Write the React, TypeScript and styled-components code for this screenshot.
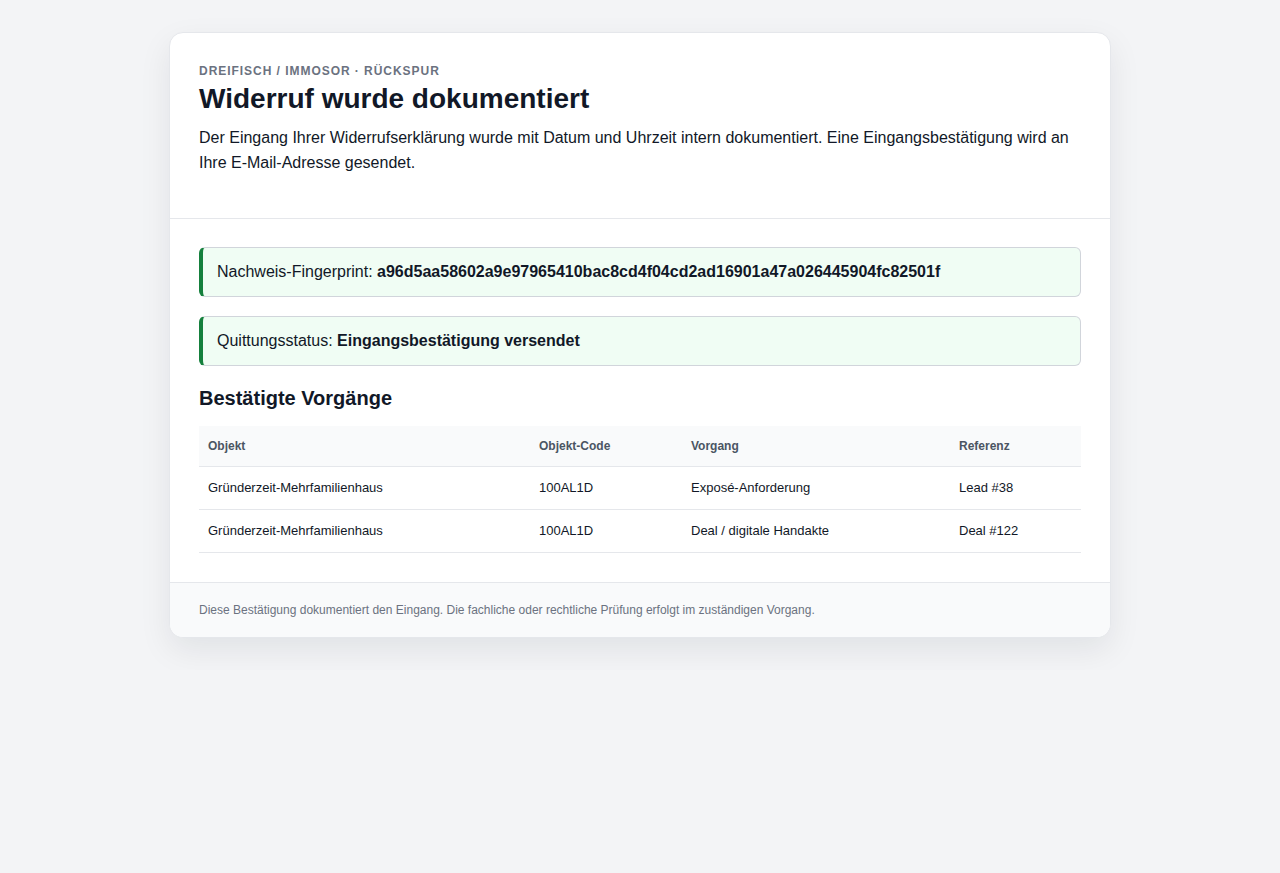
import React from 'react';
import styled, { createGlobalStyle } from 'styled-components';

const GlobalStyle = createGlobalStyle`
    html, body {
        margin: 0;
        padding: 0;
        background: #f3f4f6;
        font-family: "Liberation Sans", Arial, sans-serif;
        color: #111827;
    }
    * {
        box-sizing: border-box;
    }
`;

const Page = styled.div`
    padding: 32px 16px;
    display: flex;
    justify-content: center;
`;

const Card = styled.div`
    width: 942px;
    background: #ffffff;
    border: 1px solid #e5e7eb;
    border-radius: 14px;
    box-shadow: 0 12px 32px rgba(17, 24, 39, 0.08);
    overflow: hidden;
`;

const Header = styled.header`
    padding: 30px 29px 29px;
    border-bottom: 1px solid #e5e7eb;
`;

const Eyebrow = styled.div`
    font-size: 12px;
    line-height: 16px;
    font-weight: 700;
    letter-spacing: 0.08em;
    text-transform: uppercase;
    color: #6b7280;
`;

const Title = styled.h1`
    margin: 3px 0 9px;
    font-size: 28px;
    line-height: 34px;
    font-weight: 700;
    color: #111827;
`;

const Lead = styled.p`
    margin: 0 0 14px;
    font-size: 16px;
    line-height: 25px;
    color: #111827;
`;

const Body = styled.section`
    padding: 28px 29px 29px;
    display: flex;
    flex-direction: column;
`;

const Callout = styled.div`
    background: #f0fdf4;
    border: 1px solid #d1d5db;
    border-left: 4px solid #15803d;
    border-radius: 6px;
    padding: 12px 14px;
    font-size: 16px;
    line-height: 24px;
    margin-bottom: 19px;

    strong {
        font-weight: 700;
    }
`;

const SectionTitle = styled.h2`
    margin: 0 0 15px;
    font-size: 20px;
    line-height: 26px;
    font-weight: 700;
    color: #111827;
`;

const Table = styled.table`
    width: 100%;
    border-collapse: collapse;
    table-layout: fixed;
`;

const Th = styled.th<{ $w: number }>`
    width: ${(p) => p.$w}px;
    text-align: left;
    background: #f9fafb;
    padding: 13px 9px;
    font-size: 12px;
    line-height: 14px;
    font-weight: 700;
    color: #4b5563;
    border-bottom: 1px solid #e5e7eb;
`;

const Td = styled.td`
    padding: 13px 9px 14px;
    font-size: 13px;
    line-height: 15px;
    color: #111827;
    border-bottom: 1px solid #e5e7eb;
`;

const Footer = styled.footer`
    background: #f9fafb;
    border-top: 1px solid #e5e7eb;
    padding: 20px 29px;
    font-size: 12px;
    line-height: 14px;
    color: #6b7280;
`;

const columns = [
    { label: 'Objekt', width: 331 },
    { label: 'Objekt-Code', width: 152 },
    { label: 'Vorgang', width: 268 },
    { label: 'Referenz', width: 131 },
];

const rows = [
    ['Gründerzeit-Mehrfamilienhaus', '100AL1D', 'Exposé-Anforderung', 'Lead #38'],
    ['Gründerzeit-Mehrfamilienhaus', '100AL1D', 'Deal / digitale Handakte', 'Deal #122'],
];

export default function App() {
    return (
        <>
            <GlobalStyle />
            <Page>
                <Card>
                    <Header>
                        <Eyebrow>Dreifisch / Immosor · Rückspur</Eyebrow>
                        <Title>Widerruf wurde dokumentiert</Title>
                        <Lead>
                            Der Eingang Ihrer Widerrufserklärung wurde mit Datum und Uhrzeit intern dokumentiert. Eine
                            Eingangsbestätigung wird an Ihre E-Mail-Adresse gesendet.
                        </Lead>
                    </Header>
                    <Body>
                        <Callout>
                            Nachweis-Fingerprint: <strong>a96d5aa58602a9e97965410bac8cd4f04cd2ad16901a47a026445904fc82501f</strong>
                        </Callout>
                        <Callout>
                            Quittungsstatus: <strong>Eingangsbestätigung versendet</strong>
                        </Callout>
                        <SectionTitle>Bestätigte Vorgänge</SectionTitle>
                        <Table>
                            <thead>
                                <tr>
                                    {columns.map((c) => (
                                        <Th key={c.label} $w={c.width}>
                                            {c.label}
                                        </Th>
                                    ))}
                                </tr>
                            </thead>
                            <tbody>
                                {rows.map((r, i) => (
                                    <tr key={i}>
                                        {r.map((cell, j) => (
                                            <Td key={j}>{cell}</Td>
                                        ))}
                                    </tr>
                                ))}
                            </tbody>
                        </Table>
                    </Body>
                    <Footer>
                        Diese Bestätigung dokumentiert den Eingang. Die fachliche oder rechtliche Prüfung erfolgt im
                        zuständigen Vorgang.
                    </Footer>
                </Card>
            </Page>
        </>
    );
}
